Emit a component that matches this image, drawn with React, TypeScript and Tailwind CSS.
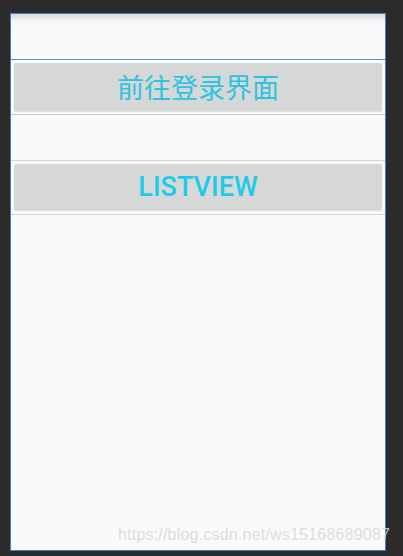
export default function App() {
  return (
    <div className="relative w-[403px] h-[556px] bg-[#2b2b2b] pt-[13px] pl-[10px] overflow-hidden">
      <div className="w-[376px] h-[538px] border border-[#3f7fc8] bg-[#fafafa] flex flex-col">
        {/* top bar area with shadow */}
        <div className="h-[45px] bg-gradient-to-b from-[#d8d8d8] via-[#f6f6f6] to-[#fafafa] bg-[length:100%_14px] bg-no-repeat" />
        <div className="h-px bg-[#5b8fcc]" />
        <div className="h-[54px] px-[3px] py-[3px] flex">
          <button className="flex-1 bg-[#d6d7d7] rounded-[2px] shadow-[0_1px_1px_rgba(0,0,0,0.12)] text-[#2ec4df] text-[27px] leading-none font-['Noto_Sans_CJK_SC','Noto_Sans',sans-serif] flex items-center justify-center pb-[2px]">
            前往登录界面
          </button>
        </div>
        <div className="h-px bg-[#b9cbe0]" />
        <div className="h-[45px]" />
        <div className="h-px bg-[#d4d4d4]" />
        <div className="h-[53px] px-[3px] pt-[3px] pb-[4px] flex">
          <button className="flex-1 bg-[#d6d7d7] rounded-[2px] shadow-[0_1px_1px_rgba(0,0,0,0.12)] text-[#1ecbea] text-[27px] leading-none font-medium font-['Roboto',sans-serif] flex items-center justify-center">
            LISTVIEW
          </button>
        </div>
        <div className="h-px bg-[#d4d4d4]" />
      </div>
      {/* watermark */}
      <div className="absolute left-[118px] top-[523px] text-[16px] text-[rgba(215,215,215,0.85)] font-['Liberation_Sans',sans-serif] tracking-[0.2px]">
        https://blog.csdn.net/ws15168689087
      </div>
    </div>
  );
}
